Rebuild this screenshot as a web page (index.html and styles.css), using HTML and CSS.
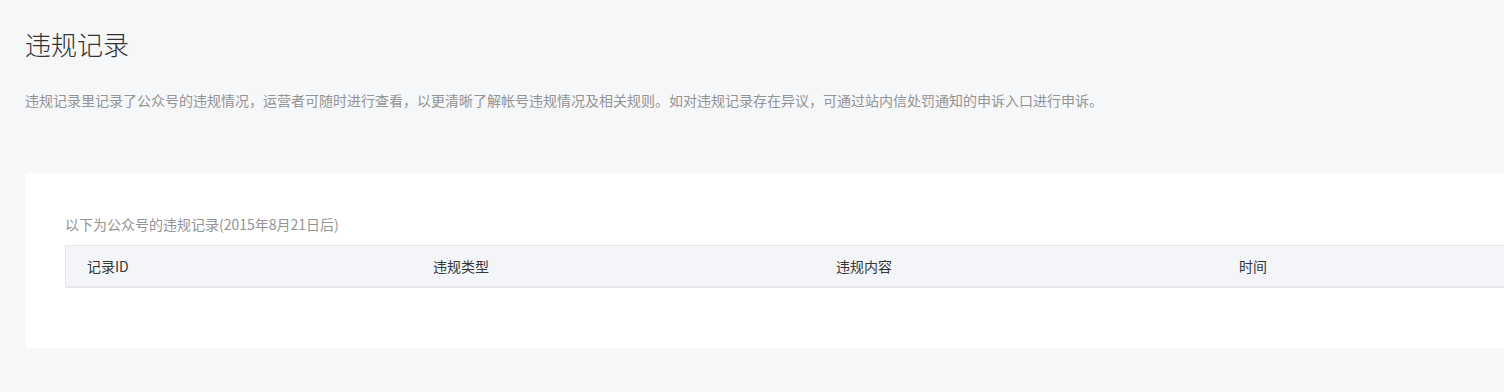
FILE: index.html
```html
<!DOCTYPE html>
<html>
    <head>
        <meta charset="utf-8">
        <title>违规记录</title>
        <link rel="stylesheet" href="styles.css">
    </head>
    <body>
        <div class="page">
            <h2 class="page-title">违规记录</h2>
            <p class="page-desc">违规记录里记录了公众号的违规情况，运营者可随时进行查看，以更清晰了解帐号违规情况及相关规则。如对违规记录存在异议，可通过站内信处罚通知的申诉入口进行申诉。</p>

            <div class="card">
                <p class="card-caption">以下为公众号的违规记录(2015年8月21日后)</p>
                <table class="record-table">
                    <thead>
                        <tr>
                            <th class="col-id">记录ID</th>
                            <th class="col-type">违规类型</th>
                            <th class="col-content">违规内容</th>
                            <th class="col-time">时间</th>
                        </tr>
                    </thead>
                </table>
            </div>
        </div>
    </body>
</html>
```

FILE: styles.css
```css
html, body {
    margin: 0;
    padding: 0;
    background-color: #f6f7f9;
    overflow: hidden;
}
body {
    font-family: "Noto Sans CJK SC", "Liberation Sans", sans-serif;
    font-size: 14px;
    color: #353535;
}
.page {
    padding: 26px 0 0 25px;
    width: 1560px;
}
.page-title {
    margin: 0;
    font-size: 26px;
    font-weight: 300;
    line-height: 36px;
    color: #333;
}
.page-desc {
    margin: 27px 0 0;
    line-height: 22px;
    color: #949494;
}
.card {
    margin-top: 62px;
    background-color: #fff;
    border-radius: 4px;
    padding: 40px 0 60px 40px;
}
.card-caption {
    margin: 0 0 10px;
    line-height: 22px;
    color: #949494;
}
.record-table {
    width: 1500px;
    border-collapse: collapse;
    table-layout: fixed;
}
.record-table th {
    height: 40px;
    padding: 0 21px;
    text-align: left;
    font-weight: normal;
    color: #353535;
    background-color: #f4f5f8;
    border-top: 1px solid #e4e6eb;
    border-bottom: 2px solid #e4e6eb;
}
.record-table th.col-id {
    border-left: 1px solid #e4e6eb;
    width: 304px;
}
.col-type,
.col-content {
    width: 361px;
}
```
